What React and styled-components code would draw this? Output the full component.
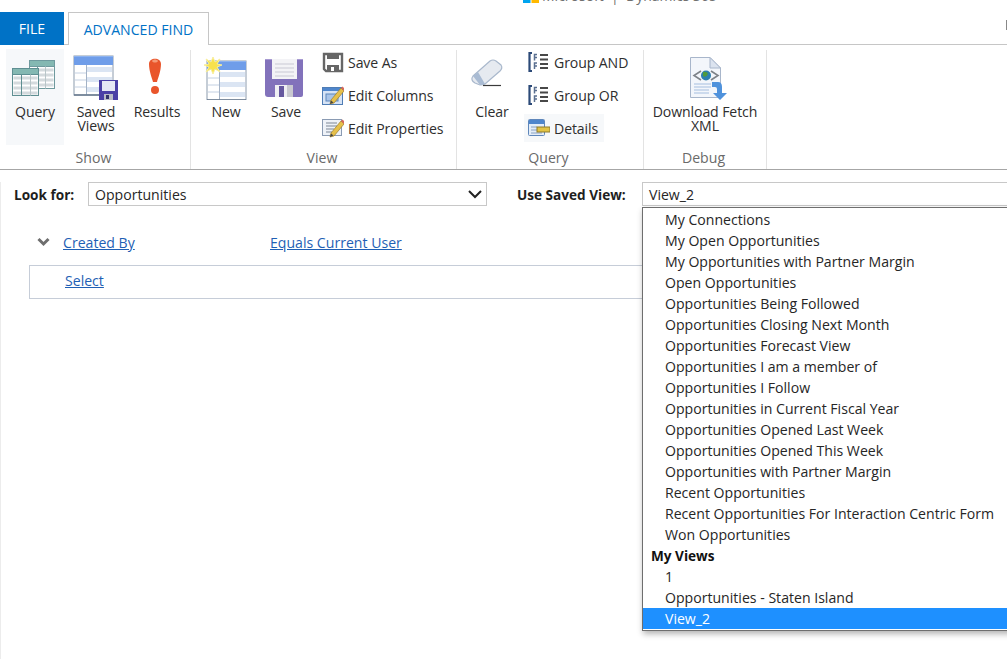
import React from "react";
import styled, { createGlobalStyle } from "styled-components";

const GlobalStyle = createGlobalStyle`
  html, body {
    margin: 0;
    height: 100%;
    overflow: hidden;
    background: #fff;
  }
  body {
    font-family: "Open Sans", "Noto Sans", "Liberation Sans", sans-serif;
    font-size: 14.1px;
    color: #262626;
  }
  * {
    box-sizing: border-box;
  }
`;

const Page = styled.div`
  width: 1007px;
  height: 659px;
  overflow: hidden;
`;

const BrandBar = styled.div`
  height: 12px;
  overflow: hidden;
  padding-left: 523px;
`;

const Brand = styled.div`
  display: flex;
  align-items: center;
  gap: 3px;
  height: 16px;
  margin-top: -13px;
  font-size: 14px;
  color: #707070;
  white-space: nowrap;
`;

const TabBar = styled.div`
  display: flex;
  align-items: flex-start;
  height: 33px;
  border-bottom: 1px solid #c6c6c6;
  position: relative;
`;

const FileTab = styled.div`
  width: 64px;
  height: 33px;
  background: #0072c6;
  color: #fff;
  text-align: center;
  line-height: 33px;
`;

const FindTab = styled.div`
  width: 141px;
  height: 33px;
  margin-left: 4px;
  background: #fff;
  border: 1px solid #c6c6c6;
  border-bottom: none;
  color: #0072c6;
  text-align: center;
  line-height: 34px;
`;

const EdgeMark = styled.span`
  position: absolute;
  right: 0;
  top: 8px;
  width: 1px;
  height: 10px;
  background: #888;
`;

const Ribbon = styled.div`
  display: flex;
  height: 125px;
  padding-top: 5px;
  border-bottom: 1px solid #a6a6a6;
`;

const Group = styled.div`
  display: flex;
  flex-direction: column;
  width: ${(p) => p.$width}px;
  border-right: 1px solid #e3e3e3;
`;

const GroupBody = styled.div`
  display: flex;
  height: 96px;
  margin-top: -1px;
  padding-left: ${(p) => p.$inset}px;
  gap: ${(p) => p.$gap || 0}px;
`;

const GroupLabel = styled.div`
  margin-top: auto;
  height: 22px;
  line-height: 21px;
  padding-right: 3px;
  text-align: center;
  color: #6a6a6a;
`;

const LargeButton = styled.div`
  display: flex;
  flex-direction: column;
  align-items: center;
  width: ${(p) => p.$width}px;
  padding-top: 3px;
  line-height: 14px;
  letter-spacing: -0.1px;
  text-align: center;
  color: #2e2e2e;
  background: ${(p) => (p.$active ? "#f6f8fa" : "transparent")};

  svg {
    flex: none;
    margin-bottom: 5px;
  }
`;

const SmallColumn = styled.div`
  display: flex;
  flex-direction: column;
  gap: 5px;
  margin-top: -1px;
  margin-left: ${(p) => p.$offset}px;
`;

const SmallButton = styled.div`
  display: flex;
  align-items: center;
  gap: 4px;
  height: 28px;
  width: fit-content;
  padding: 0 6px 0 4px;
  letter-spacing: -0.1px;
  color: #2e2e2e;
  white-space: nowrap;
  background: ${(p) => (p.$active ? "#f6f8fa" : "transparent")};
`;

const Main = styled.div`
  height: 489px;
  border-left: 1px solid #ececec;
`;

const SearchRow = styled.div`
  display: flex;
  align-items: center;
  height: 24px;
  margin-top: 12px;
  padding-left: 13px;
`;

const FieldLabel = styled.label`
  flex: none;
  width: ${(p) => p.$width}px;
  margin-left: ${(p) => p.$offset || 0}px;
  font-weight: 700;
  font-size: 13.6px;
  color: #1e1e1e;
  white-space: nowrap;
`;

const SelectBox = styled.div`
  display: flex;
  align-items: center;
  justify-content: space-between;
  flex: none;
  width: ${(p) => p.$width}px;
  height: 24px;
  padding: 0 3px 0 6px;
  border: 1px solid #c8c8c8;
  position: relative;
`;

const Menu = styled.div`
  position: absolute;
  top: 24px;
  left: -1px;
  width: 100%;
  padding: 1px 0;
  background: #fff;
  border: 1px solid #6e6e6e;
  box-shadow: 1px 3px 6px rgba(0, 0, 0, 0.3);
`;

const MenuItem = styled.div`
  height: 21px;
  line-height: 21px;
  padding-left: 22px;
  white-space: nowrap;
  background: ${(p) => (p.$selected ? "#1e90ff" : "transparent")};
  color: ${(p) => (p.$selected ? "#fff" : "#262626")};
`;

const MenuHeader = styled(MenuItem)`
  padding-left: 8px;
  font-weight: 700;
  font-size: 13.6px;
  color: #111;
`;

const CriteriaRow = styled.div`
  display: flex;
  align-items: center;
  height: 24px;
  margin-top: 24px;
  padding-left: 36px;
`;

const Collapse = styled.svg`
  flex: none;
  margin-right: 13px;
`;

const Cell = styled.div`
  width: ${(p) => p.$width}px;
`;

const Link = styled.a`
  color: #1f5fb4;
  text-decoration: underline;
`;

const ClauseBox = styled.div`
  height: 34px;
  margin: 11px 0 0 28px;
  padding-left: 35px;
  line-height: 29px;
  border: 1px solid #c6cdd8;
  border-right: none;
`;

const GridTable = ({ x, y, w, h, head, line, col }) => {
  const rows = [];
  for (let ry = y + 8; ry < y + h - 3; ry += 5) {
    rows.push(<rect key={ry} x={x + 1} y={ry} width={w - 2} height="3" fill="#d4dadd" />);
  }
  return (
    <g>
      <rect x={x} y={y} width={w} height={h} fill="#fff" stroke={line} />
      {rows}
      <rect x={x} y={y} width={w} height="6" fill={head} stroke={line} />
      <line x1={x + col} y1={y + 6} x2={x + col} y2={y + h} stroke={line} />
      <line x1={x + col * 2} y1={y + 6} x2={x + col * 2} y2={y + h} stroke="#b9c6c9" />
    </g>
  );
};

const QueryIcon = () => (
  <svg width="48" height="48" viewBox="0 0 48 48">
    <GridTable x={18.5} y={8.5} w={25} h={28} head="#84b8b2" line="#6f9a9e" col={8} />
    <GridTable x={1.5} y={16.5} w={26} h={27} head="#84b8b2" line="#5f8f92" col={9} />
  </svg>
);

const BlueTable = () => (
  <g>
    <rect x="1" y="1" width="39" height="39" fill="#fff" stroke="#8c9bae" />
    <rect x="14" y="12" width="25" height="5" fill="#dbe5f3" />
    <rect x="14" y="22" width="25" height="5" fill="#dbe5f3" />
    <rect x="14" y="32" width="25" height="5" fill="#dbe5f3" />
    <line x1="2" y1="18" x2="13" y2="18" stroke="#c3d0e2" />
    <line x1="2" y1="25" x2="13" y2="25" stroke="#c3d0e2" />
    <line x1="2" y1="32" x2="13" y2="32" stroke="#c3d0e2" />
    <line x1="13.5" y1="10" x2="13.5" y2="40" stroke="#a3b2c6" />
    <rect x="1" y="1" width="39" height="9" fill="#6f9de9" />
    <rect x="1" y="1" width="39" height="1" fill="#8db3f0" />
    <line x1="1" y1="40" x2="40" y2="40" stroke="#66778c" strokeWidth="1.5" />
  </g>
);

const SavedViewsIcon = () => (
  <svg width="48" height="48" viewBox="0 0 48 48">
    <g transform="translate(1 3)">
      <BlueTable />
    </g>
    <rect x="27" y="28" width="19" height="20" fill="#4b40a6" />
    <rect x="30" y="29" width="13" height="10" fill="#e6e8f4" />
    <rect x="32" y="42" width="9" height="6" fill="#b9bbc6" />
    <rect x="34" y="43" width="3" height="4" fill="#33336b" />
  </svg>
);

const ResultsIcon = () => (
  <svg width="48" height="48" viewBox="0 0 48 48">
    <path d="M16 12 C16 5 28 5 28 12 C28 19 25 26 24 30 L20 30 C19 26 16 19 16 12 Z" fill="#e9552b" />
    <path d="M19 9 C20 7 24 7 25 9 C24 11 20 11 19 9 Z" fill="#f59a76" />
    <circle cx="22" cy="38" r="4" fill="#e9552b" />
  </svg>
);

const NewIcon = () => (
  <svg width="48" height="48" viewBox="0 0 48 48">
    <g transform="translate(4 8)">
      <BlueTable />
    </g>
    <path
      d="M11 5 L13 10 L18 7 L15 12 L20 13 L15 15 L18 20 L13 17 L11 22 L9 17 L4 20 L7 15 L2 13 L7 12 L4 7 L9 10 Z"
      fill="#f7e14c"
      stroke="#f9ef9c"
      strokeWidth="1"
    />
  </svg>
);

const SaveIcon = () => (
  <svg width="48" height="48" viewBox="0 0 48 48">
    <path d="M3 8 H41 V43 Q41 45 39 45 H6 Q3 45 3 42 Z" fill="#8272bb" />
    <rect x="3" y="7" width="38" height="1" fill="#a79ad2" />
    <rect x="10" y="7" width="25" height="20" fill="#f3f3f6" />
    <path d="M13 12 H32 M13 16 H32 M13 20 H32 M13 24 H32" stroke="#c9c9d4" />
    <rect x="13" y="33" width="18" height="12" fill="#efeff3" />
    <rect x="17" y="34" width="5" height="11" fill="#66589f" />
    <rect x="25" y="33" width="6" height="12" fill="#c9c9d0" />
  </svg>
);

const ClearIcon = () => (
  <svg width="48" height="48" viewBox="0 0 48 48">
    <path
      d="M5 24 L22 9 Q25 7 28 9 L33 13 Q35 16 32 19 L17 32 Q15 33 12 33 L7 31 Q2 28 5 24 Z"
      fill="#e6eaf0"
      stroke="#a9b8cc"
      strokeWidth="1.2"
    />
    <path d="M5 24 L12 33 Q15 33 17 32 L10 20 Z" fill="#a9bbd3" />
    <line x1="15" y1="33.5" x2="33" y2="33.5" stroke="#3a3a3a" strokeWidth="1.2" />
  </svg>
);

const DownloadIcon = () => (
  <svg width="48" height="48" viewBox="0 0 48 48">
    <path d="M9.5 5.5 H29 L39.5 16 V45.5 H9.5 Z" fill="#f3f6fb" stroke="#a8b6cb" />
    <path d="M29 5.5 V16 H39.5 Z" fill="#dbe3ef" stroke="#a8b6cb" />
    <path d="M20 19 L13 23.5 L20 28 M30 19 L37 23.5 L30 28" fill="none" stroke="#7d8288" strokeWidth="1.6" />
    <circle cx="25" cy="23.5" r="5" fill="#2c7fb0" />
    <path d="M22 20 Q26 19 27 22 Q25 26 22 24 Z" fill="#4f9a3c" />
    <path d="M13 32 H30 M13 35 H30 M13 38 H28 M13 41 H28" stroke="#a6bde0" strokeWidth="1.2" />
    <path
      d="M31 30 H37 Q41 30 41 35 V41 H46 L39 48 L32 41 H36 V37 Q36 35 34 35 H31 Z"
      fill="#4f92dc"
    />
  </svg>
);

const SaveAsIcon = () => (
  <svg width="22" height="22" viewBox="0 0 22 22">
    <path d="M2 3 H20 V20 H4 L2 18 Z" fill="#fff" stroke="#666" strokeWidth="2.4" />
    <rect x="5" y="3" width="12" height="5" fill="#666" />
    <rect x="5" y="14" width="12" height="6" fill="#666" />
    <rect x="9" y="16" width="3" height="4" fill="#fff" />
  </svg>
);

const Pencil = () => (
  <g>
    <path d="M9 16 L19 4 L22 7 L12 19 L8 20 Z" fill="#e6c04a" stroke="#9c7c2a" strokeWidth="0.7" />
    <path d="M19 4 L20.5 2.5 L23 5.2 L22 7 Z" fill="#d9675a" />
    <path d="M8 20 L9 16.5 L11.5 18.5 Z" fill="#444" />
  </g>
);

const EditColumnsIcon = () => (
  <svg width="22" height="22" viewBox="0 0 22 22">
    <rect x="0.5" y="3.5" width="20" height="17" fill="#d6e3f5" stroke="#4f7db5" />
    <rect x="1" y="4" width="19" height="3" fill="#4f86cc" />
    <rect x="4" y="10" width="12" height="7" fill="#a9c4e8" stroke="#5f87bb" />
    <Pencil />
  </svg>
);

const EditPropertiesIcon = () => (
  <svg width="22" height="22" viewBox="0 0 22 22">
    <rect x="0.5" y="2.5" width="19" height="16" fill="#eef2f8" stroke="#8a9bb3" />
    <path d="M4 6 H15 M4 9 H15 M4 12 H12 M4 15 H10" stroke="#7c8796" />
    <Pencil />
  </svg>
);

const GroupIcon = () => (
  <svg width="22" height="22" viewBox="0 0 22 22">
    <path d="M4 2 H1.5 V20 H4" fill="none" stroke="#2c4a78" strokeWidth="2.2" />
    <path d="M9 3.5 H6.5 V6.5 H9 M6.5 6.5 V9.5 M9 12 H6.5 V15 H9 M6.5 15 V18" fill="none" stroke="#5a6f90" strokeWidth="1.5" />
    <path d="M12 4 H20 M12 8.5 H20 M12 13 H20 M12 17 H20" stroke="#484848" strokeWidth="1.9" />
  </svg>
);

const DetailsIcon = () => (
  <svg width="22" height="22" viewBox="0 0 22 22">
    <rect x="0.5" y="2.5" width="16" height="16" rx="1" fill="#e4edf8" stroke="#5f87bb" />
    <rect x="1" y="3" width="15" height="4" fill="#4f86cc" />
    <path d="M3 10 H9 M3 13 H9 M3 16 H14" stroke="#8aa2c2" />
    <rect x="9" y="10" width="13" height="5" fill="#e3c445" stroke="#8d7a2c" />
  </svg>
);

const savedViews = [
  "My Connections",
  "My Open Opportunities",
  "My Opportunities with Partner Margin",
  "Open Opportunities",
  "Opportunities Being Followed",
  "Opportunities Closing Next Month",
  "Opportunities Forecast View",
  "Opportunities I am a member of",
  "Opportunities I Follow",
  "Opportunities in Current Fiscal Year",
  "Opportunities Opened Last Week",
  "Opportunities Opened This Week",
  "Opportunities with Partner Margin",
  "Recent Opportunities",
  "Recent Opportunities For Interaction Centric Form",
  "Won Opportunities",
];

const App = () => {
  return (
    <Page>
      <GlobalStyle />
      <BrandBar>
        <Brand>
          <svg width="16" height="16" viewBox="0 0 16 16">
            <rect x="0" y="0" width="7.5" height="7.5" fill="#f25022" />
            <rect x="8.5" y="0" width="7.5" height="7.5" fill="#7fba00" />
            <rect x="0" y="8.5" width="7.5" height="7.5" fill="#00a4ef" />
            <rect x="8.5" y="8.5" width="7.5" height="7.5" fill="#ffb900" />
          </svg>
          Microsoft &nbsp;|&nbsp; Dynamics 365
        </Brand>
      </BrandBar>

      <TabBar>
        <FileTab>FILE</FileTab>
        <FindTab>ADVANCED FIND</FindTab>
        <EdgeMark />
      </TabBar>

      <Ribbon>
        <Group $width={191}>
          <GroupBody $inset={6} $gap={3}>
            <LargeButton $width={58} $active>
              <QueryIcon />
              Query
            </LargeButton>
            <LargeButton $width={58}>
              <SavedViewsIcon />
              Saved
              <br />
              Views
            </LargeButton>
            <LargeButton $width={58}>
              <ResultsIcon />
              Results
            </LargeButton>
          </GroupBody>
          <GroupLabel>Show</GroupLabel>
        </Group>

        <Group $width={266}>
          <GroupBody $inset={5}>
            <LargeButton $width={60}>
              <NewIcon />
              New
            </LargeButton>
            <LargeButton $width={60}>
              <SaveIcon />
              Save
            </LargeButton>
            <SmallColumn $offset={2}>
              <SmallButton>
                <SaveAsIcon />
                Save As
              </SmallButton>
              <SmallButton>
                <EditColumnsIcon />
                Edit Columns
              </SmallButton>
              <SmallButton>
                <EditPropertiesIcon />
                Edit Properties
              </SmallButton>
            </SmallColumn>
          </GroupBody>
          <GroupLabel>View</GroupLabel>
        </Group>

        <Group $width={187}>
          <GroupBody $inset={8}>
            <LargeButton $width={54}>
              <ClearIcon />
              Clear
            </LargeButton>
            <SmallColumn $offset={5}>
              <SmallButton>
                <GroupIcon />
                Group AND
              </SmallButton>
              <SmallButton>
                <GroupIcon />
                Group OR
              </SmallButton>
              <SmallButton $active>
                <DetailsIcon />
                Details
              </SmallButton>
            </SmallColumn>
          </GroupBody>
          <GroupLabel>Query</GroupLabel>
        </Group>

        <Group $width={123}>
          <GroupBody $inset={5}>
            <LargeButton $width={112}>
              <DownloadIcon />
              Download Fetch
              <br />
              XML
            </LargeButton>
          </GroupBody>
          <GroupLabel>Debug</GroupLabel>
        </Group>
      </Ribbon>

      <Main>
        <SearchRow>
          <FieldLabel $width={74}>Look for:</FieldLabel>
          <SelectBox $width={399}>
            Opportunities
            <svg width="16" height="10" viewBox="0 0 16 10">
              <path d="M2 2 L8 8 L14 2" fill="none" stroke="#222" strokeWidth="2" />
            </svg>
          </SelectBox>
          <FieldLabel $width={125} $offset={30}>
            Use Saved View:
          </FieldLabel>
          <SelectBox $width={500}>
            View_2
            <Menu>
              {savedViews.map((name) => (
                <MenuItem key={name}>{name}</MenuItem>
              ))}
              <MenuHeader>My Views</MenuHeader>
              <MenuItem>1</MenuItem>
              <MenuItem>Opportunities - Staten Island</MenuItem>
              <MenuItem $selected>View_2</MenuItem>
            </Menu>
          </SelectBox>
        </SearchRow>

        <CriteriaRow>
          <Collapse width="13" height="10" viewBox="0 0 13 10">
            <path d="M1.5 2 L6.5 7 L11.5 2" fill="none" stroke="#6e6e6e" strokeWidth="3" />
          </Collapse>
          <Cell $width={207}>
            <Link>Created By</Link>
          </Cell>
          <Cell $width={300}>
            <Link>Equals Current User</Link>
          </Cell>
        </CriteriaRow>
        <ClauseBox>
          <Link>Select</Link>
        </ClauseBox>
      </Main>
    </Page>
  );
};

export default App;
